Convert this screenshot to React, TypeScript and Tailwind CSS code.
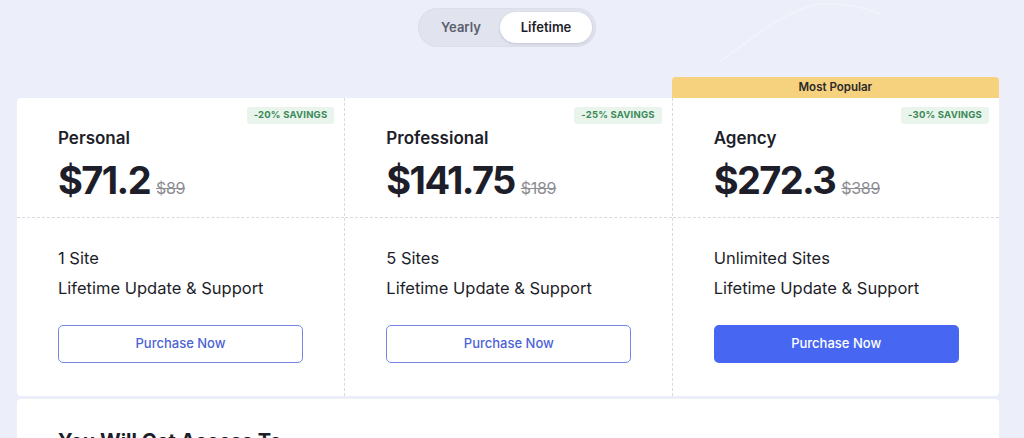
import React from "react";

type Plan = {
  name: string;
  price: string;
  old: string;
  savings: string;
  sites: string;
  popular?: boolean;
};

const PLANS: Plan[] = [
  { name: "Personal", price: "$71.2", old: "$89", savings: "-20% SAVINGS", sites: "1 Site" },
  { name: "Professional", price: "$141.75", old: "$189", savings: "-25% SAVINGS", sites: "5 Sites" },
  { name: "Agency", price: "$272.3", old: "$389", savings: "-30% SAVINGS", sites: "Unlimited Sites", popular: true },
];

export default function App() {
  return (
    <div
      className="relative w-full h-[438px] overflow-hidden bg-[#eceef9] text-[#1d1e2a]"
      style={{ fontFamily: "Inter, 'Noto Sans', sans-serif" }}
    >
      {/* faint background swoosh */}
      <svg className="absolute left-[700px] top-0 pointer-events-none" width="324" height="90" viewBox="0 0 324 90">
        <path d="M20 62 C 55 35, 90 8, 120 4 C 140 2, 160 6, 180 14" fill="none" stroke="#f2f3fa" strokeWidth="2" />
      </svg>

      <div className="relative flex justify-center pt-[8px] pr-[10px]">
        <div className="flex items-center h-[39px] w-[178px] rounded-full bg-[#e1e3ee] p-[4px] shadow-[inset_0_0_0_1px_#dcdfea]">
          <div className="flex-1 text-center text-[13px] font-semibold text-[#5b5e6c]">Yearly</div>
          <div className="flex items-center justify-center w-[92px] h-[31px] rounded-full bg-white text-[13px] font-semibold text-[#1d1e2a] shadow-[0_1px_3px_rgba(30,30,60,0.15)]">
            Lifetime
          </div>
        </div>
      </div>

      <div className="relative ml-[17px] mr-[25px] mt-[30px] grid grid-cols-3">
        {PLANS.map((p, i) => (
          <div key={p.name} className="flex flex-col">
            {p.popular ? (
              <div className="h-[21px] rounded-t-[4px] bg-[#f7d27e] flex items-center justify-center text-[11.5px] font-semibold text-[#2a2a2a]">
                Most Popular
              </div>
            ) : (
              <div className="h-[21px]" />
            )}
            <div
              className={
                "bg-white flex flex-col " +
                (i === 0 ? "rounded-tl-[4px] rounded-bl-[4px] " : "border-l border-dashed border-[#d9dae0] ") +
                (i === 2 ? "rounded-br-[4px] " : "")
              }
            >
              <div className="relative h-[120px] pl-[41px] pt-[30px] border-b border-dashed border-[#d9dae0]">
                <span className="absolute right-[10px] top-[9px] h-[17px] px-[7px] flex items-center rounded-[3px] bg-[#e9f4ec] text-[9.5px] font-bold tracking-[0.2px] text-[#3b8a57]">
                  {p.savings}
                </span>
                <div className="text-[17px] font-semibold leading-[20px]">{p.name}</div>
                <div className="mt-[10px] flex items-baseline gap-[6px]">
                  <span className="text-[38px] font-bold leading-[44px] tracking-[-1.6px]">{p.price}</span>
                  <span className="text-[16px] text-[#8c8c92] line-through tracking-[-0.3px]">{p.old}</span>
                </div>
              </div>
              <div className="h-[178px] pl-[41px] pt-[29px]">
                <div className="text-[16.5px] leading-[22px]">{p.sites}</div>
                <div className="mt-[8px] text-[16.5px] leading-[22px]">Lifetime Update &amp; Support</div>
                <button
                  className={
                    "mt-[26px] w-[245px] h-[38px] rounded-[5px] text-[13px] font-medium " +
                    (p.popular
                      ? "bg-[#4767f2] text-white"
                      : "bg-white border border-[#7587e2] text-[#4c63d6]")
                  }
                >
                  Purchase Now
                </button>
              </div>
            </div>
          </div>
        ))}
      </div>

      <div className="relative ml-[17px] mr-[25px] mt-[3px] h-[60px] rounded-t-[4px] bg-white pl-[41px] pt-[30px]">
        <div className="text-[20px] font-bold leading-[24px]">You Will Get Access To</div>
      </div>
    </div>
  );
}
